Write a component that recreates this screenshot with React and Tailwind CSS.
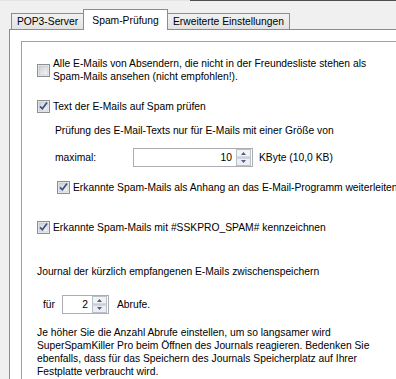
import React from 'react';

const CheckBox = ({ checked }) => (
  <svg width="13" height="13" viewBox="0 0 13 13" className="shrink-0">
    <defs>
      <linearGradient id={checked ? 'cbg1' : 'cbg0'} x1="0" y1="0" x2="1" y2="1">
        <stop offset="0" stopColor="#cbcfd5" />
        <stop offset="1" stopColor="#f7f7f7" />
      </linearGradient>
    </defs>
    <rect x="0.5" y="0.5" width="12" height="12" fill="#f4f4f4" stroke="#8f8f8f" />
    <rect x="2" y="2" width="9" height="9" fill={`url(#${checked ? 'cbg1' : 'cbg0'})`} stroke="#b9bdc4" strokeWidth="0.6" />
    {checked && (
      <path d="M3 6.3 L5.4 8.8 L10 2.6" fill="none" stroke="#3a4f86" strokeWidth="1.7" />
    )}
  </svg>
);

const Spinner = () => (
  <svg width="15" height="17" viewBox="0 0 15 17" className="shrink-0">
    <rect x="0.5" y="0.5" width="14" height="7.5" fill="#f2f3f5" stroke="#b9c0c9" />
    <rect x="0.5" y="9" width="14" height="7.5" fill="#eceef1" stroke="#b9c0c9" />
    <path d="M5 6 L7.5 3 L10 6 Z" fill="#4d5f86" />
    <path d="M5 11 L10 11 L7.5 14 Z" fill="#4d5f86" />
  </svg>
);

const SpinBox = ({ value, width }) => (
  <div className={`${width} h-[19px] border border-[#abadb3] bg-white flex items-center justify-end pr-px`}>
    <span className="mr-[4px]">{value}</span>
    <Spinner />
  </div>
);

export default function App() {
  return (
    <div className="w-[396px] h-[379px] overflow-hidden bg-[#f0f0f0] flex flex-col font-['Liberation_Sans',Arial,sans-serif] text-[10.3px] text-black leading-[13px]">
      <div className="flex h-px shrink-0">
        <div className="w-[190px] bg-[#e4e4e4]" />
        <div className="flex-1 bg-[#4f4f4f]" />
      </div>

      {/* Tabs */}
      <div className="flex items-end h-[28px] pl-[11px] shrink-0">
        <div className="w-[72px] h-[16px] border-l border-t border-[#898c95] bg-gradient-to-b from-[#f2f2f2] to-[#e2e2e2] flex items-center justify-center">
          POP3-Server
        </div>
        <div className="relative z-10 -mb-px w-[85px] h-[21px] border-l border-t border-r border-[#898c95] bg-white flex items-start justify-center pt-[4px]">
          Spam-Prüfung
        </div>
        <div className="w-[122px] h-[16px] border-t border-r border-[#898c95] bg-gradient-to-b from-[#f2f2f2] to-[#e2e2e2] flex items-center justify-center">
          Erweiterte Einstellungen
        </div>
      </div>

      {/* Panel */}
      <div className="ml-[9px] flex-1 border-l border-t border-[#898c95] bg-white pl-[11px] pt-[11px]">
        <div className="h-[400px] border-l border-t border-[#a0a0a0] pl-[15px] flex flex-col whitespace-nowrap">
          <div className="mt-[15px] flex items-center gap-[3px]">
            <CheckBox checked={false} />
            <div>
              Alle E-Mails von Absendern, die nicht in der Freundesliste stehen als
              <br />
              Spam-Mails ansehen (nicht empfohlen!).
            </div>
          </div>

          <div className="mt-[17px] flex items-center gap-[3px] h-[13px]">
            <CheckBox checked />
            <span>Text der E-Mails auf Spam prüfen</span>
          </div>

          <div className="mt-[11px] pl-[18px] h-[13px]">
            Prüfung des E-Mail-Texts nur für E-Mails mit einer Größe von
          </div>

          <div className="mt-[11px] pl-[18px] flex items-center">
            <span className="w-[78px]">maximal:</span>
            <SpinBox value="10" width="w-[120px]" />
            <span className="ml-[6px]">KByte (10,0 KB)</span>
          </div>

          <div className="mt-[14px] pl-[20px] flex items-center gap-[3px] h-[13px]">
            <CheckBox checked />
            <span>Erkannte Spam-Mails als Anhang an das E-Mail-Programm weiterleiten</span>
          </div>

          <div className="mt-[27px] flex items-center gap-[3px] h-[13px]">
            <CheckBox checked />
            <span>Erkannte Spam-Mails mit #SSKPRO_SPAM# kennzeichnen</span>
          </div>

          <div className="mt-[31px] h-[13px]">
            Journal der kürzlich empfangenen E-Mails zwischenspeichern
          </div>

          <div className="mt-[17px] pl-[6px] flex items-center">
            <span className="w-[19px]">für</span>
            <SpinBox value="2" width="w-[47px]" />
            <span className="ml-[8px]">Abrufe.</span>
          </div>

          <p className="mt-[12px]">
            Je höher Sie die Anzahl Abrufe einstellen, um so langsamer wird
            <br />
            SuperSpamKiller Pro beim Öffnen des Journals reagieren. Bedenken Sie
            <br />
            ebenfalls, dass für das Speichern des Journals Speicherplatz auf Ihrer
            <br />
            Festplatte verbraucht wird.
          </p>
        </div>
      </div>
    </div>
  );
}
